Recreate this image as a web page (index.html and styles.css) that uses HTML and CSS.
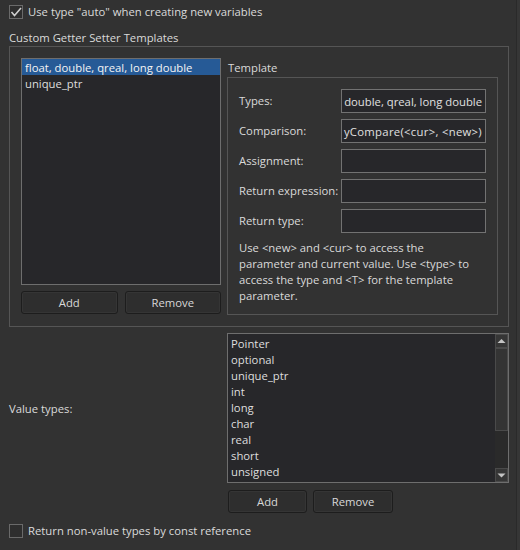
FILE: index.html
```html
<!DOCTYPE html>
<html>
<head>
<meta charset="utf-8">
<link rel="stylesheet" href="styles.css">
</head>
<body>
<div class="window">
  <div class="check-row">
    <span class="checkbox"><svg width="12" height="12" viewBox="0 0 12 12"><polyline points="1.5,6 4.5,9.5 11,2" fill="none" stroke="#cfcfcf" stroke-width="1.6"/></svg></span>
    <span class="check-label">Use type "auto" when creating new variables</span>
  </div>
  <div class="group-title">Custom Getter Setter Templates</div>
  <div class="group">
    <div class="left-col">
      <div class="list tpl-list">
        <div class="item selected">float, double, qreal, long double</div>
        <div class="item">unique_ptr</div>
      </div>
      <div class="btn-row">
        <button class="btn wide">Add</button>
        <button class="btn wide">Remove</button>
      </div>
    </div>
    <div class="right-col">
      <div class="sub-title">Template</div>
      <div class="tpl-box">
        <div class="form">
          <span class="f-label">Types:</span>
          <div class="input"><span class="input-text">double, qreal, long double</span></div>
          <span class="f-label">Comparison:</span>
          <div class="input"><span class="input-text cmp">yCompare(&lt;cur&gt;, &lt;new&gt;)</span></div>
          <span class="f-label">Assignment:</span>
          <div class="input"></div>
          <span class="f-label">Return expression:</span>
          <div class="input"></div>
          <span class="f-label">Return type:</span>
          <div class="input"></div>
        </div>
        <p class="help">Use &lt;new&gt; and &lt;cur&gt; to access the<br>parameter and current value. Use &lt;type&gt; to<br>access the type and &lt;T&gt; for the template<br>parameter.</p>
      </div>
    </div>
  </div>
  <div class="value-row">
    <span class="value-label">Value types:</span>
    <div class="value-col">
      <div class="list val-list">
        <div class="val-items">
          <div class="item">Pointer</div>
          <div class="item">optional</div>
          <div class="item">unique_ptr</div>
          <div class="item">int</div>
          <div class="item">long</div>
          <div class="item">char</div>
          <div class="item">real</div>
          <div class="item">short</div>
          <div class="item">unsigned</div>
        </div>
        <div class="scrollbar">
          <div class="sb-btn"><svg width="11" height="12" viewBox="0 0 11 12"><polygon points="1.5,8 9.5,8 5.5,4" fill="#c4c4c4"/></svg></div>
          <div class="sb-thumb"></div>
          <div class="sb-track"></div>
          <div class="sb-btn"><svg width="11" height="12" viewBox="0 0 11 12"><polygon points="1.5,4.5 9.5,4.5 5.5,8.5" fill="#c4c4c4"/></svg></div>
        </div>
      </div>
      <div class="btn-row val-btns">
        <button class="btn b-add">Add</button>
        <button class="btn b-remove">Remove</button>
      </div>
    </div>
  </div>
  <div class="check-row bottom-check">
    <span class="checkbox"></span>
    <span class="check-label">Return non-value types by const reference</span>
  </div>
</div>
</body>
</html>
```
FILE: styles.css
```css
html, body {
  margin: 0;
  padding: 0;
}
body {
  background: #363636;
  width: 520px;
  height: 550px;
  overflow: hidden;
  font-family: "Open Sans", "Noto Sans", sans-serif;
  font-size: 11.3px;
  color: #dadada;
}
.window {
  width: 517px;
  height: 550px;
  box-sizing: border-box;
  background: #323232;
  border-right: 1px solid #2a2a2a;
  padding: 5px 0 0 9px;
  display: flex;
  flex-direction: column;
}
.check-row {
  display: flex;
  align-items: center;
  gap: 5px;
  height: 14px;
}
.checkbox {
  width: 12px;
  height: 12px;
  border: 1px solid #6a6a6a;
  background: #2e2e2e;
  display: flex;
  align-items: center;
  justify-content: center;
  flex: none;
}
.checkbox svg { display: block; }
.check-label {
  line-height: 16px;
  white-space: nowrap;
}
.group-title {
  margin-top: 11px;
  line-height: 16px;
  height: 16px;
}
.group {
  width: 500px;
  box-sizing: border-box;
  border: 1px solid #555555;
  padding: 11px 10px 11px 11px;
  display: flex;
  gap: 6px;
  align-items: flex-start;
}
.left-col {
  width: 200px;
  display: flex;
  flex-direction: column;
  gap: 6px;
}
.list {
  box-sizing: border-box;
  border: 1px solid #6e6e6e;
  background: #27272a;
}
.tpl-list {
  height: 227px;
}
.item {
  height: 16px;
  line-height: 17px;
  padding-left: 3px;
  white-space: nowrap;
  color: #dedede;
}
.item.selected {
  background: #265a96;
  color: #f4f4f4;
}
.btn-row {
  display: flex;
  gap: 7px;
}
.btn {
  height: 23px;
  box-sizing: border-box;
  border: 1px solid #1d1d1d;
  border-radius: 3px;
  background: #2e2e2e;
  color: #d8d8d8;
  font-family: inherit;
  font-size: 11.3px;
  padding: 0;
  line-height: 20px;
  box-shadow: inset 0 0 0 1px #353535;
}
.btn.wide {
  width: 97px;
}
.right-col {
  width: 271px;
  display: flex;
  flex-direction: column;
}
.sub-title {
  height: 19px;
  line-height: 16px;
  padding-top: 2px;
  box-sizing: border-box;
  padding-left: 1px;
}
.tpl-box {
  height: 238px;
  box-sizing: border-box;
  border: 1px solid #555555;
  padding: 11px 11px 10px 11px;
}
.form {
  display: grid;
  grid-template-columns: 102px 145px;
  grid-auto-rows: 24px;
  row-gap: 6px;
  align-items: center;
}
.f-label {
  white-space: nowrap;
  line-height: 16px;
}
.input {
  height: 24px;
  box-sizing: border-box;
  border: 1px solid #727272;
  background: #27272a;
  display: flex;
  justify-content: flex-end;
  align-items: center;
  overflow: hidden;
  padding-right: 3px;
}
.input-text {
  white-space: nowrap;
  flex: none;
  color: #e0e0e0;
}
.input-text.cmp {
  letter-spacing: 0.3px;
}
.help {
  margin: 7px 0 0 0;
  line-height: 16px;
  white-space: nowrap;
}
.value-row {
  margin-top: 6px;
  display: flex;
  align-items: flex-start;
}
.value-label {
  width: 218px;
  height: 150px;
  display: flex;
  align-items: center;
  flex: none;
}
.value-col {
  width: 282px;
  display: flex;
  flex-direction: column;
}
.val-list {
  height: 150px;
  display: flex;
}
.val-items {
  flex: 1;
  padding-top: 1px;
}
.scrollbar {
  width: 13px;
  display: flex;
  flex-direction: column;
  background: #2a2a2a;
}
.sb-btn {
  height: 14px;
  box-sizing: border-box;
  border: 1px solid #4a4a4a;
  background: #363636;
  display: flex;
  align-items: center;
  justify-content: center;
  flex: none;
}
.sb-btn svg { display: block; }
.sb-thumb {
  height: 83px;
  box-sizing: border-box;
  border: 1px solid #4a4a4a;
  background: #343434;
  flex: none;
}
.sb-track {
  flex: 1;
  background: #2a2a2a;
}
.val-btns {
  margin-top: 7px;
  margin-left: 1px;
  gap: 6px;
}
.b-add { width: 79px; }
.b-remove { width: 80px; }
.bottom-check {
  margin-top: 11px;
}
```
